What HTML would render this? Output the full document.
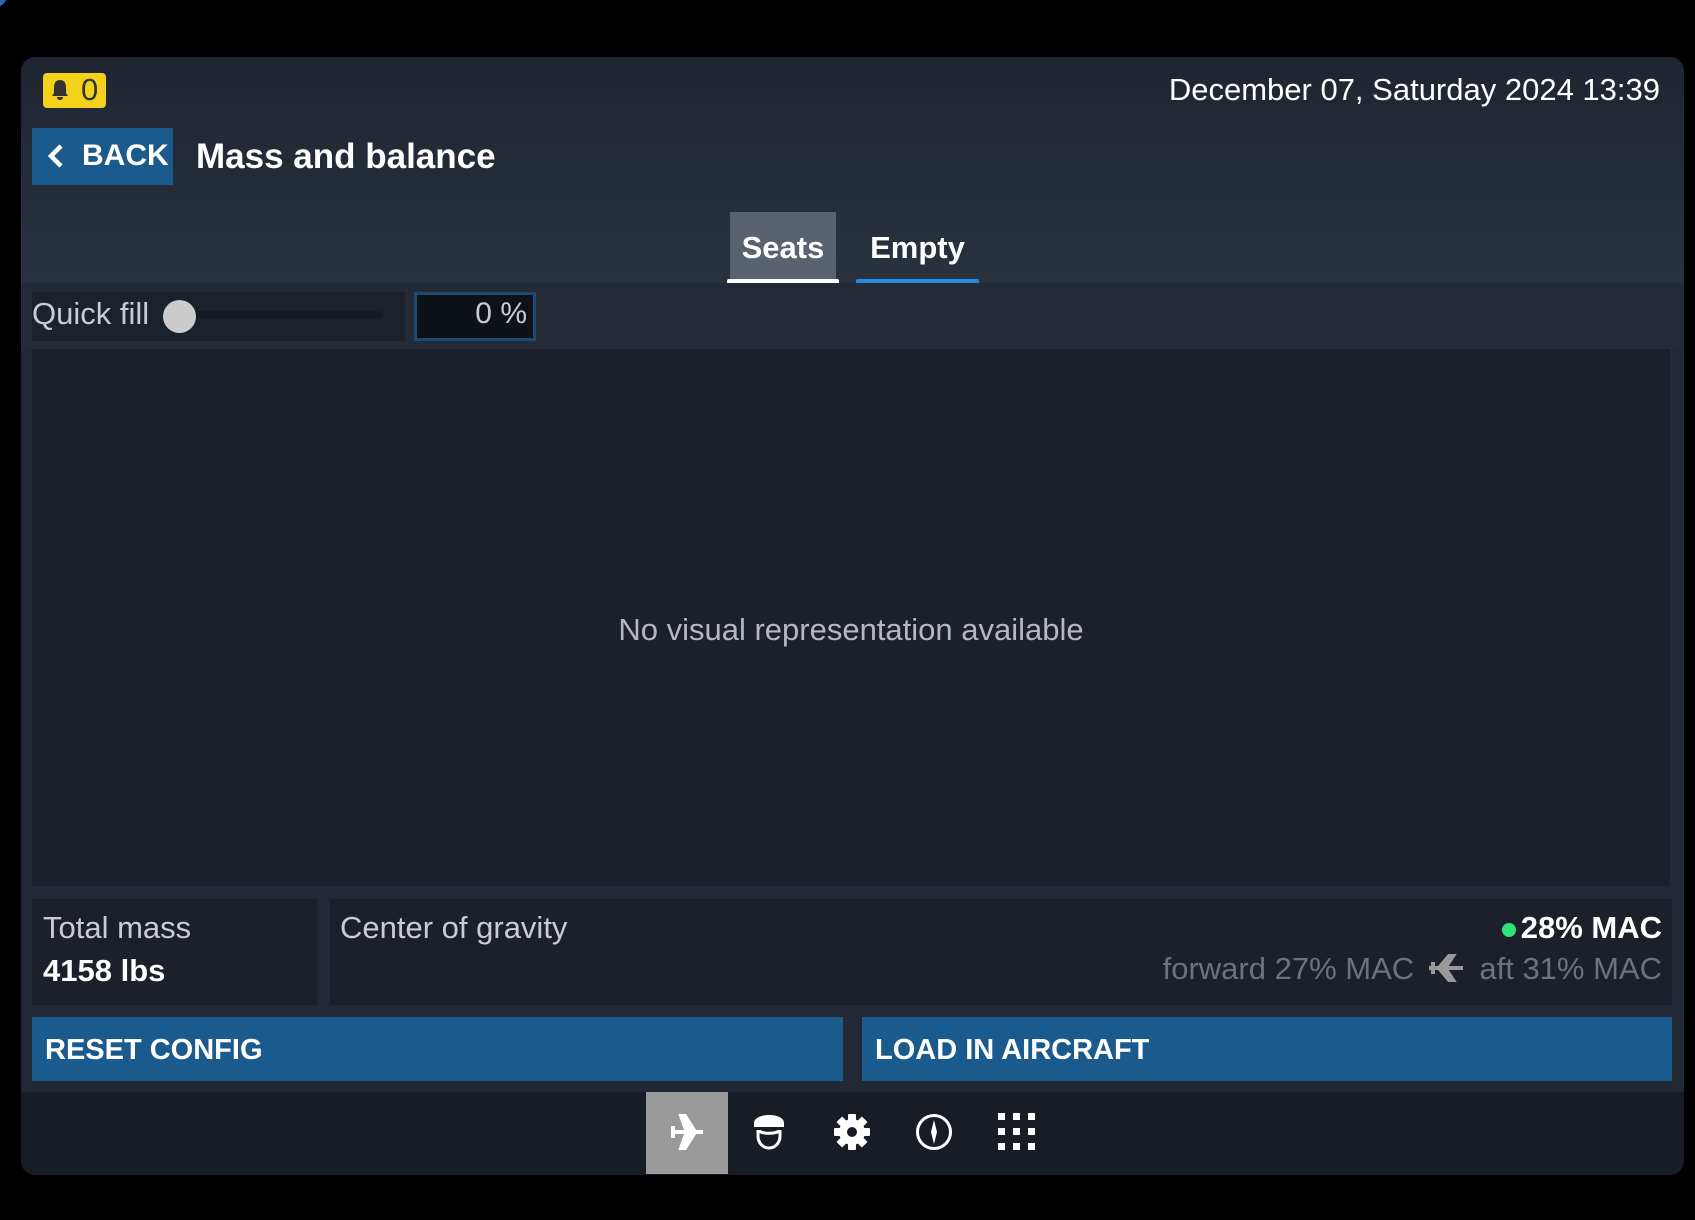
<!DOCTYPE html>
<html><head><meta charset="utf-8"><style>
*{margin:0;padding:0;box-sizing:border-box}
body{width:1695px;height:1220px;background:#000;font-family:"Liberation Sans",sans-serif;position:relative;overflow:hidden;color:#fff}
.abs{position:absolute}
#panel{left:21px;top:57px;width:1663px;height:1118px;background:#222935;border-radius:14px;overflow:hidden}
#hdr{left:0;top:0;width:1663px;height:227px;background:linear-gradient(#1f2530,#2a3241)}
</style></head><body>
<div class="abs" style="left:-22px;top:-22px;width:30px;height:30px;border-radius:50%;background:#2a63b0"></div>
<div class="abs" id="panel">
<div class="abs" id="hdr"></div>
</div>
<div class="abs" style="left:43px;top:73px;width:63px;height:35px;background:#f2d21a;border-radius:4px"></div>
<svg class="abs" style="left:50px;top:78px" width="20" height="24" viewBox="0 0 20 24"><path d="M10 2c-4 0-6 3-6 7v6l-2 3h16l-2-3V9c0-4-2-7-6-7z M7 19h6c0 2-1.5 3-3 3s-3-1-3-3z" fill="#333"/></svg>
<div class="abs" style="left:81px;top:72px;font-size:31px;color:#333">0</div>
<div class="abs" style="left:0;top:72px;width:1660px;text-align:right;font-size:31px;color:#fff">December 07, Saturday 2024 13:39</div>
<div class="abs" style="left:32px;top:128px;width:141px;height:57px;background:#1b5a8c"></div>
<svg class="abs" style="left:46px;top:143px" width="20" height="26" viewBox="0 0 20 26"><path d="M15 3L5 13l10 10" stroke="#fff" stroke-width="4.5" fill="none"/></svg>
<div class="abs" style="left:82px;top:139px;font-size:30px;font-weight:bold;color:#fff">BACK</div>
<div class="abs" style="left:196px;top:137px;font-size:35px;font-weight:bold;color:#fff">Mass and balance</div>
<div class="abs" style="left:730px;top:212px;width:106px;height:70px;background:#5a6170"></div>
<div class="abs" style="left:727px;top:279px;width:112px;height:5px;background:#fff;border-radius:2px"></div>
<div class="abs" style="left:730px;top:230px;width:106px;text-align:center;font-size:31px;font-weight:bold">Seats</div>
<div class="abs" style="left:856px;top:279px;width:123px;height:5px;background:#1f8ae0;border-radius:2px"></div>
<div class="abs" style="left:856px;top:230px;width:123px;text-align:center;font-size:31px;font-weight:bold">Empty</div>
<div class="abs" style="left:21px;top:283px;width:1663px;height:66px;background:#242b37"></div>
<div class="abs" style="left:32px;top:292px;width:373px;height:49px;background:#1c222c"></div>
<div class="abs" style="left:32px;top:296px;font-size:31px;color:#c9ccd2">Quick fill</div>
<div class="abs" style="left:180px;top:311px;width:203px;height:8px;background:#161a22;border-radius:4px"></div>
<div class="abs" style="left:163px;top:300px;width:33px;height:33px;background:#ccc;border-radius:50%"></div>
<div class="abs" style="left:414px;top:292px;width:122px;height:49px;background:#0d1118;border:3px solid #1b4a72"></div>
<div class="abs" style="left:414px;top:297px;width:113px;text-align:right;font-size:30px;color:#ccc">0 %</div>
<div class="abs" style="left:32px;top:349px;width:1638px;height:537px;background:#1b202a"></div>
<div class="abs" style="left:32px;top:612px;width:1638px;text-align:center;font-size:31px;color:#b5b8be">No visual representation available</div>
<div class="abs" style="left:32px;top:899px;width:285px;height:106px;background:#1b202a"></div>
<div class="abs" style="left:43px;top:910px;font-size:31px;color:#c9ccd2">Total mass</div>
<div class="abs" style="left:43px;top:953px;font-size:31px;font-weight:bold">4158 lbs</div>
<div class="abs" style="left:330px;top:899px;width:1342px;height:106px;background:#1b202a"></div>
<div class="abs" style="left:340px;top:910px;font-size:31px;color:#c9ccd2">Center of gravity</div>
<div class="abs" style="left:1502px;top:923px;width:14px;height:14px;border-radius:50%;background:#2ee27a"></div>
<div class="abs" style="left:0;width:1662px;top:910px;text-align:right;font-size:31px;font-weight:bold">28% MAC</div>
<div class="abs" style="left:0;width:1662px;top:951px;text-align:right;font-size:31px;color:#6e737b">forward 27% MAC <span style="display:inline-block;width:48px"></span> aft 31% MAC</div>
<svg class="abs" style="left:1425px;top:950px" width="40" height="36" viewBox="0 0 40 36"><g transform="translate(40 0) scale(-1 1)"><path d="M2 18h34M20 18l-8-12h4l10 12-10 12h-4zM32 12v12" stroke="#999" stroke-width="4" fill="#999"/></g></svg>
<div class="abs" style="left:32px;top:1017px;width:811px;height:64px;background:#1b5a8c"></div>
<div class="abs" style="left:45px;top:1034px;font-size:29px;font-weight:bold">RESET CONFIG</div>
<div class="abs" style="left:862px;top:1017px;width:810px;height:64px;background:#1b5a8c"></div>
<div class="abs" style="left:875px;top:1034px;font-size:29px;font-weight:bold">LOAD IN AIRCRAFT</div>
<div class="abs" style="left:21px;top:1092px;width:1663px;height:83px;background:#171c25;border-radius:0 0 14px 14px"></div>
<div class="abs" style="left:646px;top:1092px;width:82px;height:82px;background:#9a9a9a"></div>
<svg class="abs" style="left:667px;top:1112px" width="40" height="40" viewBox="0 0 40 40"><path d="M4 20h32M20 20l-6-16h4l10 16-10 16h-4zM6 14v12" stroke="#fff" stroke-width="4" fill="#fff"/></svg>
<svg class="abs" style="left:751px;top:1113px" width="36" height="38" viewBox="0 0 36 38"><path d="M3 10c0-5 7-8 15-8s15 3 15 8v4H3z" fill="#fff"/><path d="M7 17v6c0 7 5 12 11 12s11-5 11-12v-6" stroke="#fff" stroke-width="3" fill="none"/><path d="M8 18c4 3 16 3 20 0" stroke="#fff" stroke-width="3" fill="none"/></svg>
<svg class="abs" style="left:833px;top:1113px" width="38" height="38" viewBox="0 0 38 38"><g fill="#fff"><circle cx="19" cy="19" r="13"/><rect x="15" y="1" width="8" height="36" rx="1"/><rect x="15" y="1" width="8" height="36" rx="1" transform="rotate(45 19 19)"/><rect x="15" y="1" width="8" height="36" rx="1" transform="rotate(90 19 19)"/><rect x="15" y="1" width="8" height="36" rx="1" transform="rotate(135 19 19)"/></g><circle cx="19" cy="19" r="5" fill="#171c25"/></svg>
<svg class="abs" style="left:915px;top:1113px" width="38" height="38" viewBox="0 0 38 38"><circle cx="19" cy="19" r="16.5" stroke="#fff" stroke-width="3" fill="none"/><path d="M19 7l3 12-3 12-3-12z" fill="#fff"/></svg>
<svg class="abs" style="left:998px;top:1113px" width="38" height="38" viewBox="0 0 38 38"><g fill="#fff"><rect x="0" y="0" width="7" height="7"/><rect x="15" y="0" width="7" height="7"/><rect x="30" y="0" width="7" height="7"/><rect x="0" y="15" width="7" height="7"/><rect x="15" y="15" width="7" height="7"/><rect x="30" y="15" width="7" height="7"/><rect x="0" y="30" width="7" height="7"/><rect x="15" y="30" width="7" height="7"/><rect x="30" y="30" width="7" height="7"/></g></svg>
</body></html>
